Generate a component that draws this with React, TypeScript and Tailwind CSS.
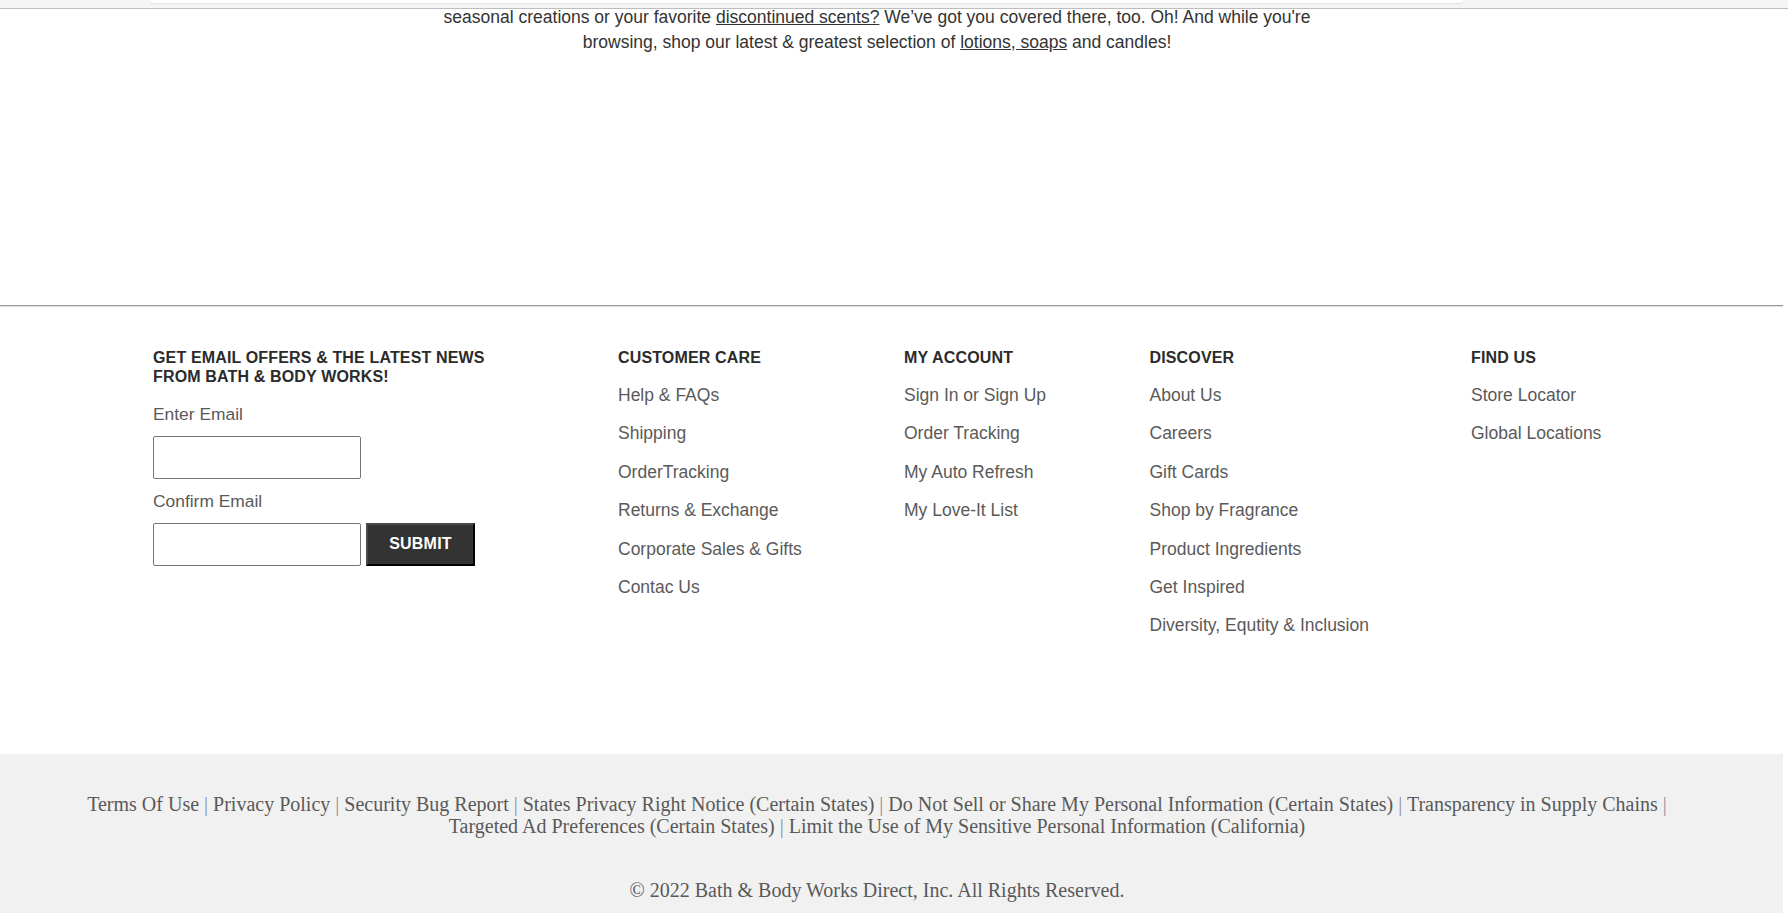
import React from "react";

const columns = [
  {
    title: "CUSTOMER CARE",
    links: ["Help & FAQs", "Shipping", "OrderTracking", "Returns & Exchange", "Corporate Sales & Gifts", "Contac Us"],
  },
  {
    title: "MY ACCOUNT",
    links: ["Sign In or Sign Up", "Order Tracking", "My Auto Refresh", "My Love-It List"],
  },
  {
    title: "DISCOVER",
    links: [
      "About Us",
      "Careers",
      "Gift Cards",
      "Shop by Fragrance",
      "Product Ingredients",
      "Get Inspired",
      "Diversity, Equtity & Inclusion",
    ],
  },
  {
    title: "FIND US",
    links: ["Store Locator", "Global Locations"],
  },
];

const legalTop = [
  "Terms Of Use",
  "Privacy Policy",
  "Security Bug Report",
  "States Privacy Right Notice (Certain States)",
  "Do Not Sell or Share My Personal Information (Certain States)",
  "Transparency in Supply Chains",
];

const legalBottom = ["Targeted Ad Preferences (Certain States)", "Limit the Use of My Sensitive Personal Information (California)"];

export default function App() {
  return (
    <div className="w-full min-h-screen bg-white font-['Liberation_Sans',Arial,sans-serif]">
      {/* sticky header edge */}
      <div className="relative z-10 h-[9px] w-full bg-[#f5f5f5] border-b border-[#bdbdbd]">
        <div className="ml-[150px] w-[1313px] h-[3px] bg-white rounded-b-[10px] shadow-[0_1px_2px_rgba(0,0,0,0.08)]" />
      </div>

      <div className="w-[1783px]">
        <div className="pr-[29px] -mt-[3.7px] mb-[251px]">
          <p className="text-center text-[17.5px] leading-[24.4px] text-[#333]">
            seasonal creations or your favorite <a className="underline">discontinued scents?</a> We’ve got you covered there, too. Oh! And while you're
            <br />
            browsing, shop our latest &amp; greatest selection of <a className="underline">lotions, soaps</a> and candles!
          </p>
        </div>

        <div className="border-t border-t-[#999] border-b border-b-[#dedede]" />

        <div className="h-[447px] pt-[40.5px] pl-[153px] grid grid-cols-[465px_286px_245.5px_321.5px_1fr] items-start">
          <div>
            <h3 className="text-[16px] leading-[19px] font-bold tracking-[0.15px] text-[#2b2b2b]">
              GET EMAIL OFFERS &amp; THE LATEST NEWS
              <br />
              FROM BATH &amp; BODY WORKS!
            </h3>
            <label className="block mt-[18.3px] text-[17.4px] leading-[20px] text-[#5a5a5a]">Enter Email</label>
            <input className="block mt-[11.8px] w-[208px] h-[43px] border border-[#767676] rounded-[2px] bg-white" />
            <label className="block mt-[12.4px] text-[17.4px] leading-[20px] text-[#5a5a5a]">Confirm Email</label>
            <div className="flex mt-[11.6px]">
              <input className="block w-[208px] h-[43px] border border-[#767676] rounded-[2px] bg-white" />
              <button className="ml-[5px] w-[109px] h-[43px] bg-[#333] text-white text-[16px] font-bold tracking-[0.2px] border-2 border-t-[#4a4a4a] border-l-[#4a4a4a] border-r-black border-b-black">
                SUBMIT
              </button>
            </div>
          </div>

          {columns.map((col) => (
            <div key={col.title}>
              <h3 className="text-[16px] leading-[19px] font-bold tracking-[0.15px] text-[#2b2b2b] mb-[9.3px]">{col.title}</h3>
              <ul>
                {col.links.map((l) => (
                  <li key={l} className="text-[17.5px] leading-[38.4px] text-[#5a5a5a] whitespace-nowrap">
                    <a>{l}</a>
                  </li>
                ))}
              </ul>
            </div>
          ))}
        </div>

        <div className="bg-[#f1f1f1] pt-[38.5px] pb-[12px] pr-[29px] font-['Liberation_Serif','Times_New_Roman',serif] text-[20px] leading-[22.8px] text-[#595959] text-center">
          <div>
            {legalTop.map((t) => (
              <span key={t}>
                <a>{t}</a> <span className="text-[#8a8fa0]">|</span>{" "}
              </span>
            ))}
          </div>
          <div>
            {legalBottom.map((t, i) => (
              <span key={t}>
                <a>{t}</a>
                {i === 0 && (
                  <>
                    {" "}
                    <span className="text-[#8a8fa0]">|</span>{" "}
                  </>
                )}
              </span>
            ))}
          </div>
          <div className="mt-[41px]">© 2022 Bath &amp; Body Works Direct, Inc. All Rights Reserved.</div>
        </div>
      </div>
    </div>
  );
}
